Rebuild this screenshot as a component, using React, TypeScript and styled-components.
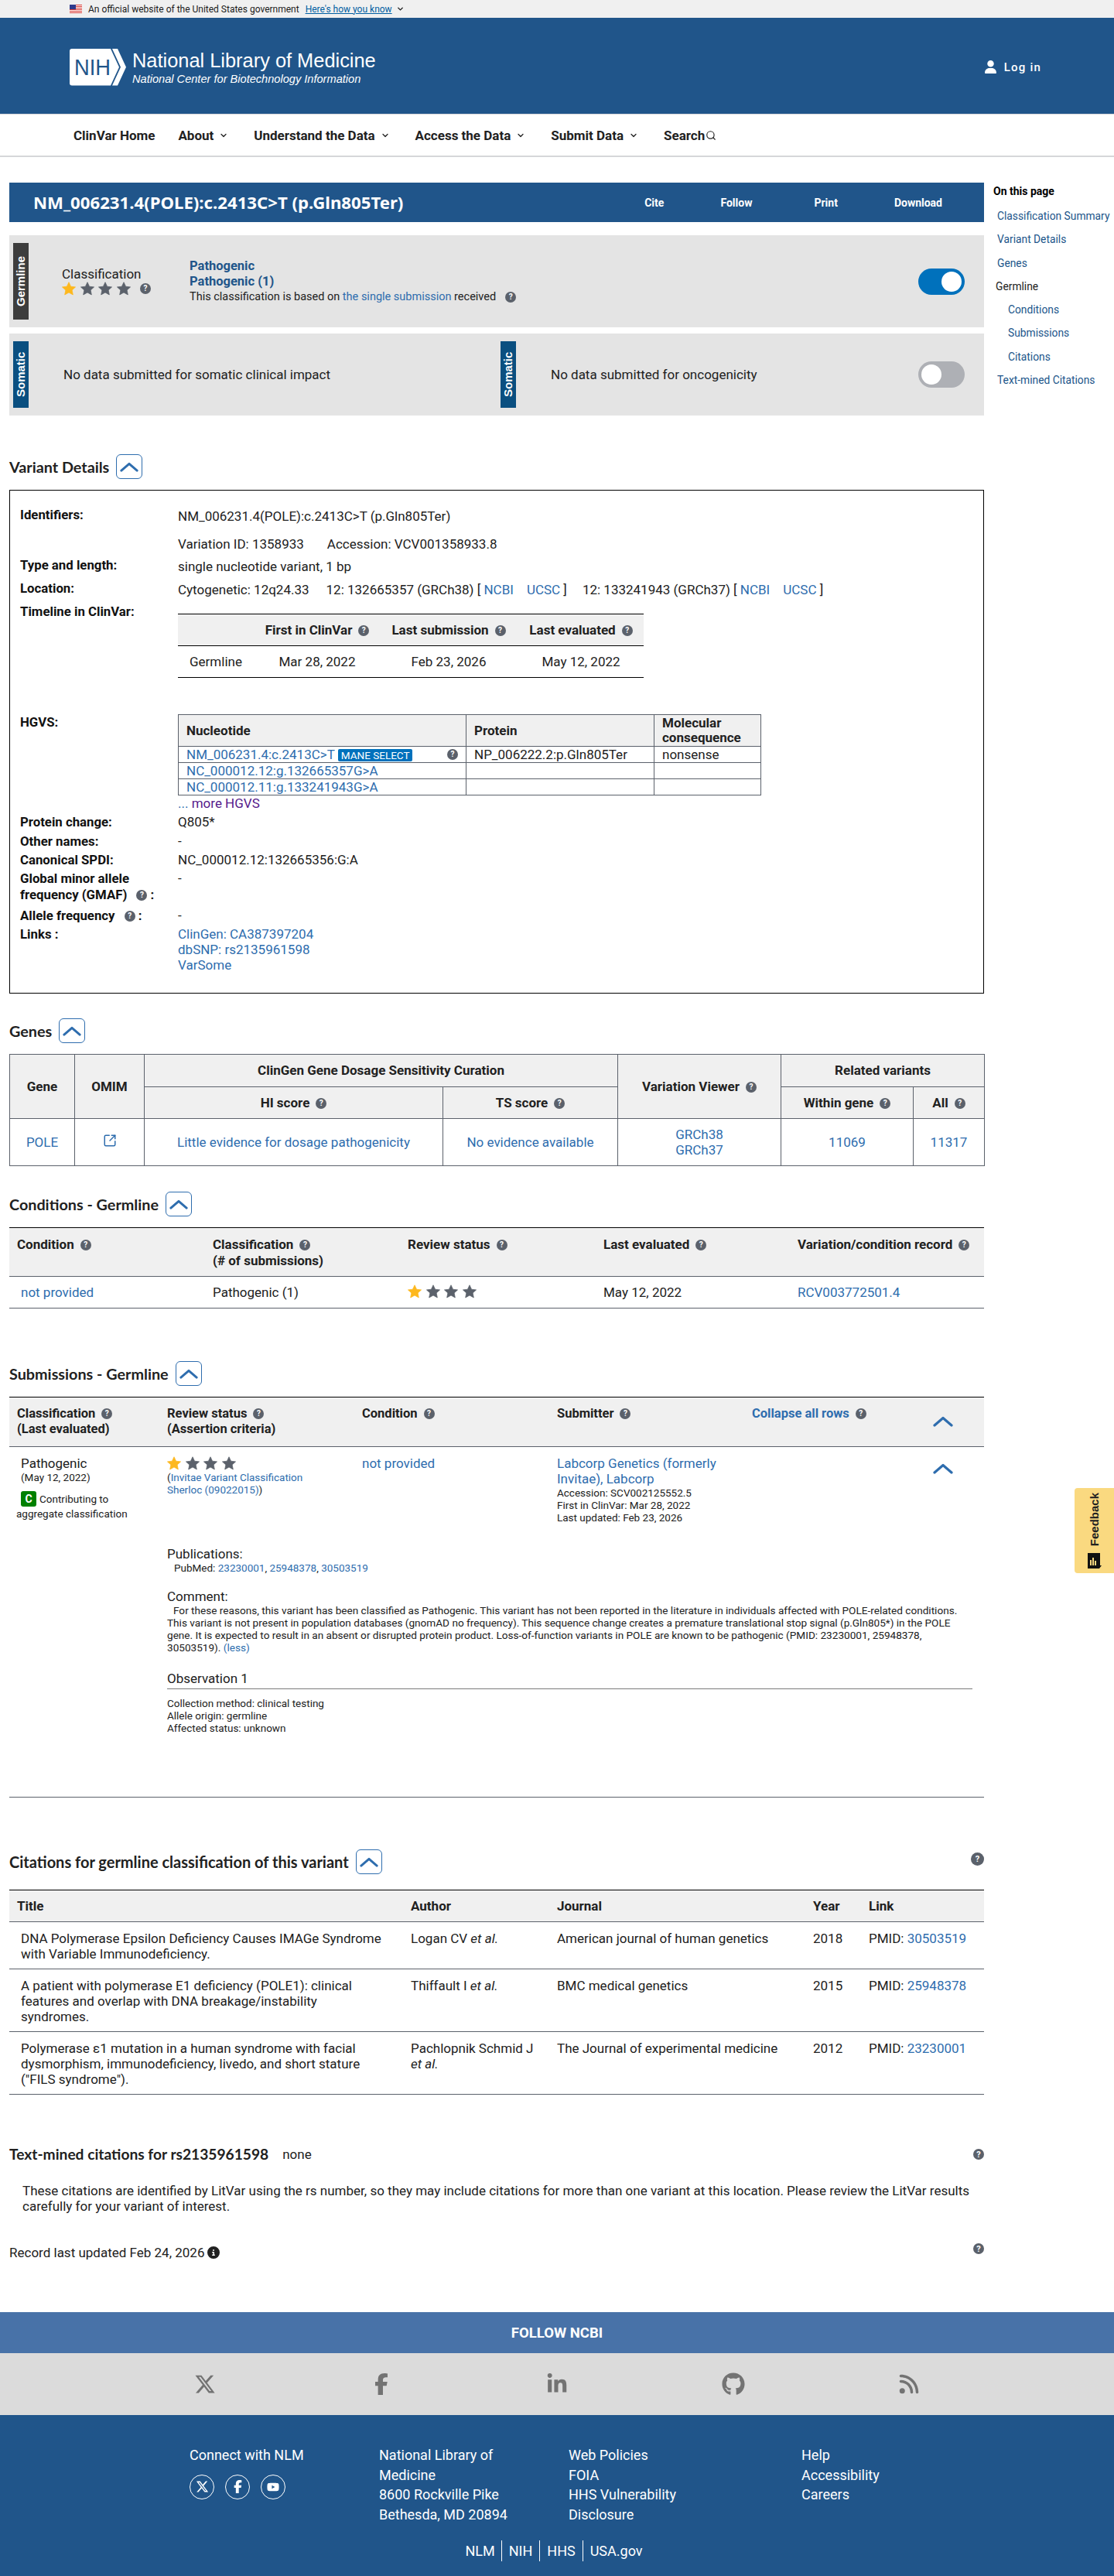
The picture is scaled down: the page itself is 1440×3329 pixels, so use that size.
import React from 'react';
import styled, { createGlobalStyle } from 'styled-components';
import { ChevronDown, Search, SquareArrowOutUpRight } from 'lucide-react';
import { FaXTwitter, FaFacebookF, FaLinkedinIn, FaGithub, FaRss, FaUser, FaCircleInfo, FaYoutube } from 'react-icons/fa6';

const NAVY = '#20558a';
const LINK = '#2e6dae';
const RULE = '#5b616b';

const GlobalStyle = createGlobalStyle`
  html, body { margin: 0; padding: 0; background: #fff; }
  body { font-family: Roboto, "Liberation Sans", sans-serif; font-size: 17px; color: #212121; }
  * { box-sizing: border-box; }
  table { border-collapse: collapse; table-layout: fixed; }
`;

const Page = styled.div`
  position: relative;
  width: 1440px;
  overflow: hidden;
`;

const Link = styled.a`
  color: ${LINK};
  text-decoration: none;
`;

/* top of page */
const GovBanner = styled.div`
  height: 23px;
  background: #f0f0f0;
  display: flex;
  align-items: center;
  padding-left: 90px;
  font-size: 12px;
  color: #1b1b1b;
`;
const GovText = styled.span`
  margin-left: 8px;
`;
const GovLink = styled.a`
  color: #005ea2;
  text-decoration: underline;
  margin-left: 8px;
`;
const GovChevron = styled(ChevronDown)`
  margin-left: 5px;
`;

const Header = styled.header`
  height: 125px;
  background: ${NAVY};
  display: flex;
  align-items: center;
  justify-content: space-between;
  padding: 3px 94px 0 90px;
  border-bottom: 1px solid #d6d7d9;
`;
const Brand = styled.div`
  display: flex;
  align-items: center;
  gap: 8px;
  color: #fff;
  font-family: "Liberation Sans", Arial, sans-serif;
`;
const BrandName = styled.div`
  font-size: 25.4px;
  line-height: 30px;
`;
const BrandSub = styled.div`
  font-size: 14.6px;
  font-style: italic;
  line-height: 18px;
`;
const LogIn = styled.a`
  display: flex;
  align-items: center;
  gap: 9px;
  color: #fff;
  font-size: 15px;
  font-weight: 500;
  letter-spacing: 1.2px;
`;

const Nav = styled.nav`
  height: 55px;
  display: flex;
  align-items: center;
  gap: 33px;
  padding-left: 95px;
  border-bottom: 2px solid #d6d7d9;
`;
const NavItem = styled.a<{ $first?: boolean }>`
  display: flex;
  align-items: center;
  gap: 7px;
  font-size: 17px;
  font-weight: 700;
  color: #212121;
  margin-right: ${p => (p.$first ? '-3px' : '0')};
`;
const SearchItem = styled(NavItem)`
  gap: 1px;
`;

/* main + right rail */
const Main = styled.main`
  display: flex;
  height: 2785px;
  padding: 26px 0 0 12px;
`;
const Content = styled.div`
  width: 1260px;
  padding-top: 7px;
`;
const Rail = styled.aside`
  margin-left: 12px;
  padding-top: 8px;
  font-size: 13.8px;
  display: flex;
  flex-direction: column;
`;
const RailTitle = styled.div`
  font-weight: 700;
  font-size: 14px;
  color: #000;
  line-height: 20px;
  margin-bottom: 12px;
`;
const RailLink = styled.a<{ $indent?: boolean }>`
  color: ${NAVY};
  line-height: 20px;
  margin: 0 0 10.3px ${p => (p.$indent ? '19px' : '5px')};
`;
const RailText = styled.span`
  line-height: 20px;
  margin: 0 0 10.3px 3px;
  color: #212121;
`;

const TitleBar = styled.div`
  height: 51px;
  background: ${NAVY};
  color: #fff;
  display: flex;
  align-items: center;
  padding-left: 31px;
`;
const VariantTitle = styled.h1`
  margin: 0;
  font-family: "Noto Sans", sans-serif;
  font-size: 22.2px;
  font-weight: 700;
`;
const Actions = styled.div`
  margin-left: auto;
  margin-right: 54px;
  display: flex;
  gap: 73px;
  font-size: 14px;
  font-weight: 700;
`;
const Action = styled.span<{ $extra?: number }>`
  margin-left: ${p => p.$extra ?? 0}px;
`;

const SummaryCard = styled.div<{ $h: number; $mt: number }>`
  height: ${p => p.$h}px;
  margin-top: ${p => p.$mt}px;
  background: #e4e4e4;
  display: flex;
  align-items: center;
  padding: 0 25px 0 5px;
`;
const SideTab = styled.div<{ $color: string }>`
  align-self: center;
  width: 20px;
  height: calc(100% - 20px);
  background: ${p => p.$color};
  color: #fff;
  writing-mode: vertical-rl;
  transform: rotate(180deg);
  text-align: center;
  font-family: "Liberation Sans", Arial, sans-serif;
  font-weight: 700;
  font-size: 15px;
  line-height: 20px;
  flex: none;
`;
const ClassLabel = styled.div`
  width: 165px;
  margin-left: 43px;
  margin-top: -2px;
  line-height: 20px;
`;
const ClassResult = styled.div`
  line-height: 20px;
`;
const Strong = styled.div`
  color: ${NAVY};
  font-weight: 700;
  font-size: 16.5px;
`;
const SmallLine = styled.div`
  font-size: 14.5px;
  display: flex;
  align-items: center;
  gap: 12px;
`;
const NoData = styled.div<{ $w: number }>`
  margin-left: 45px;
  width: ${p => p.$w}px;
`;
const Toggle = styled.div<{ $on?: boolean }>`
  margin-left: auto;
  width: 60px;
  height: 34px;
  flex: none;
  border-radius: 17px;
  background: ${p => (p.$on ? '#0071bc' : '#aeb0b5')};
  display: flex;
  align-items: center;
  justify-content: ${p => (p.$on ? 'flex-end' : 'flex-start')};
  padding: 0 4px;
`;
const Knob = styled.span`
  width: 26px;
  height: 26px;
  border-radius: 50%;
  background: #fff;
`;

const Help = styled.span<{ $size?: number }>`
  display: inline-flex;
  align-items: center;
  justify-content: center;
  flex: none;
  width: ${p => p.$size ?? 14}px;
  height: ${p => p.$size ?? 14}px;
  border-radius: 50%;
  background: ${RULE};
  color: #fff;
  font-family: Roboto, sans-serif;
  font-size: 10px;
  font-weight: 700;
  line-height: 1;
  vertical-align: 2px;
`;
const HelpGap = styled(Help)`
  margin-left: 7px;
  margin-top: 2px;
`;

const StarRow = styled.div`
  display: flex;
  gap: 5.5px;
`;

const SectionHead = styled.div<{ $mt: number; $mb: number }>`
  display: flex;
  align-items: center;
  gap: 9px;
  margin-top: ${p => p.$mt}px;
  margin-bottom: ${p => p.$mb}px;
`;
const SectionTitle = styled.h2<{ $size?: number }>`
  margin: 0;
  font-family: Lato, sans-serif;
  font-size: ${p => p.$size ?? 19.8}px;
  line-height: 22px;
  font-weight: 700;
  color: #212121;
`;
const CollapseBtn = styled.button`
  width: 34px;
  height: 32px;
  padding: 0;
  background: #fff;
  border: 1px solid ${LINK};
  border-radius: 6px;
  display: flex;
  align-items: center;
  justify-content: center;
`;
const FarHelp = styled(Help)<{ $up?: number }>`
  margin-left: auto;
  font-size: 11px;
  margin-top: ${p => -(p.$up ?? 0)}px;
`;

/* variant details box */
const DetailBox = styled.div`
  height: 651px;
  border: 1px solid #000;
  padding: 23px 0 0 13px;
`;
const DetailRow = styled.div<{ $mt?: number }>`
  display: grid;
  grid-template-columns: 204px 1fr;
  line-height: 20px;
  margin-top: ${p => p.$mt ?? 0}px;
`;
const DetailLabel = styled.div<{ $lh?: number; $up?: number }>`
  font-weight: 700;
  font-size: 16.8px;
  color: #111;
  line-height: ${p => p.$lh ?? 20}px;
  margin-top: ${p => -(p.$up ?? 0)}px;
`;
const Spaced = styled.div<{ $mt?: number }>`
  margin-top: ${p => p.$mt ?? 0}px;
`;
const Gap = styled.span<{ $w: number }>`
  display: inline-block;
  width: ${p => p.$w}px;
`;

const Timeline = styled.table`
  width: 602px;
  margin-top: 13px;
  border-top: 1px solid #000;
  border-bottom: 1px solid #000;
  th {
    height: 41px;
    background: #f0f0f0;
    border-bottom: 1px solid #000;
    font-weight: 700;
    text-align: center;
    padding: 0;
  }
  td {
    height: 41px;
    text-align: center;
    padding: 0;
  }
  td:first-child {
    text-align: left;
    padding-left: 15px;
  }
`;
const HeadHelp = styled(Help)`
  margin-left: 8px;
`;

const Hgvs = styled.table`
  width: 753px;
  line-height: 20px;
  th, td {
    border: 1px solid ${RULE};
    padding: 0 10px;
    text-align: left;
  }
  th {
    height: 41px;
    background: #f0f0f0;
    font-weight: 700;
    line-height: 19px;
  }
  td {
    height: 21px;
  }
`;
const HgvsCell = styled.div`
  display: flex;
  align-items: center;
  justify-content: space-between;
`;
const Mane = styled.span`
  background: #0071bc;
  color: #fff;
  font-size: 13.5px;
  line-height: 15px;
  padding: 0 4px;
  border-radius: 2px;
  margin-left: 4px;
`;
const MoreHgvs = styled.div`
  color: ${LINK};
`;
const Visited = styled.a`
  color: #551a8b;
`;

/* generic grid tables */
const GenesTable = styled.table`
  width: 1260px;
  th, td {
    border: 1px solid ${RULE};
    text-align: center;
    padding: 0;
  }
  th {
    height: 41.5px;
    background: #f0f0f0;
    font-weight: 700;
  }
  td {
    height: 61px;
    line-height: 20px;
  }
`;
const DataTable = styled.table`
  width: 1260px;
  border-top: 1px solid #000;
  th {
    text-align: left;
    vertical-align: top;
    background: #f0f0f0;
    border-bottom: 1px solid ${RULE};
    padding: 11px 10px 0;
    line-height: 21px;
    font-weight: 700;
  }
  td {
    border-bottom: 1px solid ${RULE};
    vertical-align: top;
    padding: 11px 10px 0;
    line-height: 20px;
  }
  td:first-child {
    padding-left: 15px;
    padding-right: 22px;
  }
`;
const ConditionsHead = styled.tr`
  height: 63px;
`;
const ConditionsRow = styled.tr`
  height: 41px;
  td {
    padding-top: 10px;
  }
`;
const CitationHead = styled.tr`
  height: 41px;
  th {
    padding-top: 10px;
  }
`;
const CitationRow = styled.tr<{ $h: number }>`
  height: ${p => p.$h}px;
`;

/* submissions */
const SubmissionBlock = styled.div`
  height: 518px;
  border-bottom: 1px solid ${RULE};
`;
const SubGrid = styled.div`
  display: grid;
  grid-template-columns: 194px 252px 252px 252px 310px;
`;
const SubHead = styled(SubGrid)`
  height: 65px;
  border-top: 1px solid #000;
  border-bottom: 1px solid ${RULE};
  background: #f0f0f0;
  font-weight: 700;
  font-size: 16.5px;
  line-height: 20px;
  padding-top: 11px;
`;
const SubCell = styled.div<{ $indent?: number }>`
  padding-left: ${p => p.$indent ?? 10}px;
`;
const CollapseCell = styled.div`
  padding-left: 10px;
  padding-right: 40px;
  display: flex;
  justify-content: space-between;
`;
const CollapseAll = styled.span`
  color: ${LINK};
`;
const SubBody = styled(SubGrid)`
  padding-top: 11px;
`;
const Tiny = styled.div<{ $pl?: number }>`
  font-size: 13.5px;
  line-height: 16px;
  padding-left: ${p => p.$pl ?? 0}px;
`;
const Badge = styled.span`
  display: inline-flex;
  width: 20px;
  height: 20px;
  align-items: center;
  justify-content: center;
  background: #008000;
  color: #fff;
  font-weight: 700;
  font-size: 14px;
  border-radius: 3px;
  margin-right: 4px;
  vertical-align: top;
`;
const BadgeLine = styled.div`
  font-size: 13.5px;
  margin-top: 10px;
  line-height: 20px;
`;
const BadgeTail = styled.div`
  font-size: 13.5px;
  line-height: 18px;
  margin-left: -6px;
`;
const Line20 = styled.div`
  line-height: 20px;
`;
const StarSlot = styled.div`
  height: 20px;
  padding-top: 1px;
`;
const SubDetails = styled.div`
  margin-left: 204px;
  width: 1041px;
  margin-top: 29px;
`;
const SubTitle = styled.div<{ $mt?: number }>`
  line-height: 20px;
  margin-top: ${p => p.$mt ?? 0}px;
`;
const ObsTitle = styled.div`
  margin-top: 22px;
  line-height: 20px;
  border-bottom: 1px solid #7a7a7a;
  padding-bottom: 3px;
  margin-bottom: 10px;
`;
const CommentText = styled.div`
  font-size: 13.6px;
  line-height: 16px;
  text-indent: 8px;
`;

/* text mined + record */
const TextMinedHead = styled.div`
  display: flex;
  align-items: center;
  margin-top: 66px;
`;
const NoneText = styled.span`
  margin-left: 18px;
`;
const Paragraph = styled.p`
  margin: 26px 0 0 17px;
  width: 1232px;
  line-height: 20px;
`;
const RecordLine = styled.div`
  margin-top: 40px;
  display: flex;
  align-items: center;
  line-height: 20px;
`;
const InfoIcon = styled(FaCircleInfo)`
  margin-left: 4px;
`;

/* footer */
const FollowBar = styled.div`
  height: 53px;
  background: #4872a8;
  color: #fff;
  font-size: 18.5px;
  font-weight: 700;
  display: flex;
  align-items: center;
  justify-content: center;
`;
const SocialBar = styled.div`
  height: 80px;
  background: #dbdbdb;
  display: flex;
  align-items: center;
  justify-content: space-between;
  padding: 0 250px;
  color: #737373;
`;
const SocialSlot = styled.span`
  width: 30px;
  display: flex;
  justify-content: center;
`;
const FooterBody = styled.div`
  height: 208px;
  background: ${NAVY};
  color: #fff;
  padding-top: 39px;
  font-size: 18px;
`;
const FooterCols = styled.div`
  display: grid;
  grid-template-columns: 245px 245px 301px 1fr;
  padding-left: 245px;
  line-height: 25.6px;
  height: 102px;
`;
const Circles = styled.div`
  display: flex;
  gap: 14px;
  margin-top: 12px;
`;
const Circle = styled.span`
  width: 32px;
  height: 32px;
  border: 1px solid #fff;
  border-radius: 50%;
  display: flex;
  align-items: center;
  justify-content: center;
`;
const BottomLinks = styled.div`
  margin-top: 21px;
  padding-right: 8px;
  display: flex;
  align-items: center;
  justify-content: center;
`;
const BottomLink = styled.a`
  line-height: 27px;
  padding: 0 9px;
  border-right: 1px solid #fff;
  &:first-child { padding-left: 0; padding-right: 8px; }
  &:last-child { border-right: none; padding-right: 0; }
`;

const Feedback = styled.div`
  position: absolute;
  right: 0;
  top: 1923px;
  width: 51px;
  height: 110px;
  background: #fad980;
  border-radius: 4px 0 0 4px;
  display: flex;
  flex-direction: column;
  align-items: center;
  justify-content: center;
  gap: 8px;
`;
const FeedbackText = styled.span`
  writing-mode: vertical-rl;
  transform: rotate(180deg);
  font-family: "Liberation Sans", Arial, sans-serif;
  font-weight: 700;
  font-size: 15px;
  color: #212121;
`;

const UpChevron = ({ w = 24, h = 13 }: { w?: number; h?: number }) => (
  <svg width={w} height={h} viewBox="0 0 26 14">
    <polyline points="2,12 13,2.5 24,12" fill="none" stroke={LINK} strokeWidth="3.2" strokeLinecap="round" strokeLinejoin="round" />
  </svg>
);

const Star = ({ on }: { on?: boolean }) => (
  <svg width="18" height="18" viewBox="0 0 24 24">
    <polygon
      points="12,1 15.4,8.3 23.4,9.2 17.5,14.6 19.1,22.6 12,18.6 4.9,22.6 6.5,14.6 0.6,9.2 8.6,8.3"
      fill={on ? '#fdb81e' : RULE}
      stroke={on ? '#fdb81e' : RULE}
      strokeLinejoin="round"
    />
  </svg>
);
const Stars = () => (
  <StarRow>
    <Star on />
    <Star />
    <Star />
    <Star />
  </StarRow>
);

const Flag = () => (
  <svg width="16" height="11" viewBox="0 0 16 11">
    <rect width="16" height="11" fill="#fff" />
    <rect width="16" height="1" fill="#d83933" />
    <rect y="2" width="16" height="1" fill="#d83933" />
    <rect y="4" width="16" height="1" fill="#d83933" />
    <rect y="6" width="16" height="1" fill="#d83933" />
    <rect y="8" width="16" height="1" fill="#d83933" />
    <rect y="10" width="16" height="1" fill="#d83933" />
    <rect width="8" height="6" fill="#2e3a8c" />
  </svg>
);

const NihLogo = () => (
  <svg width="73" height="48" viewBox="0 0 73 48">
    <path d="M3 0 H53 L64 23.8 L53 47.5 H3 A3 3 0 0 1 0 44.5 V3 A3 3 0 0 1 3 0 Z" fill="#fff" />
    <path d="M55 0 H62 L73 23.8 L62 47.5 H55 L66 23.8 Z" fill="#fff" />
    <text x="6" y="34" fontFamily="Liberation Sans, Arial, sans-serif" fontSize="29" textLength="47" lengthAdjust="spacingAndGlyphs" fill={NAVY}>NIH</text>
  </svg>
);

const FeedbackMark = () => (
  <svg width="18" height="20" viewBox="0 0 18 20">
    <path d="M0 0 H16 V16 H18 L15 20 H0 Z" fill="#111" />
    <rect x="3" y="9" width="2" height="7" fill="#fad980" />
    <rect x="6" y="6" width="2" height="10" fill="#fad980" />
    <rect x="9" y="10" width="2" height="6" fill="#fad980" />
  </svg>
);

const App = () => (
  <Page>
    <GlobalStyle />
    <GovBanner>
      <Flag />
      <GovText>An official website of the United States government</GovText>
      <GovLink>Here's how you know</GovLink>
      <GovChevron size={11} strokeWidth={3} />
    </GovBanner>

    <Header>
      <Brand>
        <NihLogo />
        <div>
          <BrandName>National Library of Medicine</BrandName>
          <BrandSub>National Center for Biotechnology Information</BrandSub>
        </div>
      </Brand>
      <LogIn>
        <FaUser size={17} />
        Log in
      </LogIn>
    </Header>

    <Nav>
      <NavItem $first>ClinVar Home</NavItem>
      <NavItem>About <ChevronDown size={12} strokeWidth={2.5} /></NavItem>
      <NavItem>Understand the Data <ChevronDown size={12} strokeWidth={2.5} /></NavItem>
      <NavItem>Access the Data <ChevronDown size={12} strokeWidth={2.5} /></NavItem>
      <NavItem>Submit Data <ChevronDown size={12} strokeWidth={2.5} /></NavItem>
      <SearchItem>Search<Search size={14} strokeWidth={2} /></SearchItem>
    </Nav>

    <Main>
      <Content>
        <TitleBar>
          <VariantTitle>NM_006231.4(POLE):c.2413C&gt;T (p.Gln805Ter)</VariantTitle>
          <Actions>
            <Action>Cite</Action>
            <Action>Follow</Action>
            <Action $extra={7}>Print</Action>
            <Action>Download</Action>
          </Actions>
        </TitleBar>

        <SummaryCard $h={119} $mt={17}>
          <SideTab $color="#3d3d3d">Germline</SideTab>
          <ClassLabel>
            Classification
            <StarRow>
              <Star on />
              <Star />
              <Star />
              <Star />
              <HelpGap>?</HelpGap>
            </StarRow>
          </ClassLabel>
          <ClassResult>
            <Strong>Pathogenic</Strong>
            <Strong>Pathogenic (1)</Strong>
            <SmallLine>
              <span>This classification is based on <Link>the single submission</Link> received</span>
              <Help>?</Help>
            </SmallLine>
          </ClassResult>
          <Toggle $on><Knob /></Toggle>
        </SummaryCard>

        <SummaryCard $h={106} $mt={8}>
          <SideTab $color="#0a4f80">Somatic</SideTab>
          <NoData $w={565}>No data submitted for somatic clinical impact</NoData>
          <SideTab $color="#0a4f80">Somatic</SideTab>
          <NoData $w={400}>No data submitted for oncogenicity</NoData>
          <Toggle><Knob /></Toggle>
        </SummaryCard>

        <SectionHead $mt={50} $mb={14}>
          <SectionTitle>Variant Details</SectionTitle>
          <CollapseBtn><UpChevron /></CollapseBtn>
        </SectionHead>

        <DetailBox>
          <DetailRow>
            <DetailLabel $up={2}>Identifiers:</DetailLabel>
            <div>
              NM_006231.4(POLE):c.2413C&gt;T (p.Gln805Ter)
              <Spaced $mt={16}>Variation ID: 1358933<Gap $w={30} />Accession: VCV001358933.8</Spaced>
            </div>
          </DetailRow>
          <DetailRow $mt={9}>
            <DetailLabel $up={2}>Type and length:</DetailLabel>
            <div>single nucleotide variant, 1 bp</div>
          </DetailRow>
          <DetailRow $mt={10}>
            <DetailLabel $up={2}>Location:</DetailLabel>
            <div>
              Cytogenetic: 12q24.33<Gap $w={22} />12: 132665357 (GRCh38) [ <Link>NCBI</Link><Gap $w={17} /><Link>UCSC</Link> ]<Gap $w={20} />12: 133241943 (GRCh37) [ <Link>NCBI</Link><Gap $w={17} /><Link>UCSC</Link> ]
            </div>
          </DetailRow>
          <DetailRow $mt={8}>
            <DetailLabel>Timeline in ClinVar:</DetailLabel>
            <Timeline>
              <colgroup>
                <col width={100} />
                <col width={160} />
                <col width={180} />
                <col width={162} />
              </colgroup>
              <thead>
                <tr>
                  <th />
                  <th>First in ClinVar<HeadHelp>?</HeadHelp></th>
                  <th>Last submission<HeadHelp>?</HeadHelp></th>
                  <th>Last evaluated<HeadHelp>?</HeadHelp></th>
                </tr>
              </thead>
              <tbody>
                <tr>
                  <td>Germline</td>
                  <td>Mar 28, 2022</td>
                  <td>Feb 23, 2026</td>
                  <td>May 12, 2022</td>
                </tr>
              </tbody>
            </Timeline>
          </DetailRow>
          <DetailRow $mt={47}>
            <DetailLabel>HGVS:</DetailLabel>
            <div>
              <Hgvs>
                <colgroup>
                  <col width={372} />
                  <col width={243} />
                  <col width={138} />
                </colgroup>
                <thead>
                  <tr>
                    <th>Nucleotide</th>
                    <th>Protein</th>
                    <th>Molecular consequence</th>
                  </tr>
                </thead>
                <tbody>
                  <tr>
                    <td>
                      <HgvsCell>
                        <span><Link>NM_006231.4:c.2413C&gt;T</Link><Mane>MANE SELECT</Mane></span>
                        <Help>?</Help>
                      </HgvsCell>
                    </td>
                    <td>NP_006222.2:p.Gln805Ter</td>
                    <td>nonsense</td>
                  </tr>
                  <tr>
                    <td><Link>NC_000012.12:g.132665357G&gt;A</Link></td>
                    <td />
                    <td />
                  </tr>
                  <tr>
                    <td><Link>NC_000012.11:g.133241943G&gt;A</Link></td>
                    <td />
                    <td />
                  </tr>
                </tbody>
              </Hgvs>
              <MoreHgvs>... <Visited>more HGVS</Visited></MoreHgvs>
            </div>
          </DetailRow>
          <DetailRow $mt={4}>
            <DetailLabel>Protein change:</DetailLabel>
            <div>Q805*</div>
          </DetailRow>
          <DetailRow $mt={5}>
            <DetailLabel>Other names:</DetailLabel>
            <div>-</div>
          </DetailRow>
          <DetailRow $mt={4}>
            <DetailLabel>Canonical SPDI:</DetailLabel>
            <div>NC_000012.12:132665356:G:A</div>
          </DetailRow>
          <DetailRow $mt={4}>
            <DetailLabel $lh={21}>Global minor allele<br />frequency (GMAF) <HeadHelp>?</HeadHelp> :</DetailLabel>
            <div>-</div>
          </DetailRow>
          <DetailRow $mt={6}>
            <DetailLabel>Allele frequency <HeadHelp>?</HeadHelp> :</DetailLabel>
            <div>-</div>
          </DetailRow>
          <DetailRow $mt={4}>
            <DetailLabel>Links :</DetailLabel>
            <div>
              <Link>ClinGen: CA387397204</Link><br />
              <Link>dbSNP: rs2135961598</Link><br />
              <Link>VarSome</Link>
            </div>
          </DetailRow>
        </DetailBox>

        <SectionHead $mt={32} $mb={14}>
          <SectionTitle>Genes</SectionTitle>
          <CollapseBtn><UpChevron /></CollapseBtn>
        </SectionHead>

        <GenesTable>
          <colgroup>
            <col width={84} />
            <col width={90} />
            <col width={386} />
            <col width={226} />
            <col width={211} />
            <col width={171} />
            <col width={92} />
          </colgroup>
          <thead>
            <tr>
              <th rowSpan={2}>Gene</th>
              <th rowSpan={2}>OMIM</th>
              <th colSpan={2}>ClinGen Gene Dosage Sensitivity Curation</th>
              <th rowSpan={2}>Variation Viewer<HeadHelp>?</HeadHelp></th>
              <th colSpan={2}>Related variants</th>
            </tr>
            <tr>
              <th>HI score<HeadHelp>?</HeadHelp></th>
              <th>TS score<HeadHelp>?</HeadHelp></th>
              <th>Within gene<HeadHelp>?</HeadHelp></th>
              <th>All<HeadHelp>?</HeadHelp></th>
            </tr>
          </thead>
          <tbody>
            <tr>
              <td><Link>POLE</Link></td>
              <td><Link><SquareArrowOutUpRight size={18} /></Link></td>
              <td><Link>Little evidence for dosage pathogenicity</Link></td>
              <td><Link>No evidence available</Link></td>
              <td><Link>GRCh38</Link><br /><Link>GRCh37</Link></td>
              <td><Link>11069</Link></td>
              <td><Link>11317</Link></td>
            </tr>
          </tbody>
        </GenesTable>

        <SectionHead $mt={33} $mb={14}>
          <SectionTitle>Conditions - Germline</SectionTitle>
          <CollapseBtn><UpChevron /></CollapseBtn>
        </SectionHead>

        <DataTable>
          <colgroup>
            <col width={253} />
            <col width={252} />
            <col width={253} />
            <col width={251} />
            <col width={251} />
          </colgroup>
          <thead>
            <ConditionsHead>
              <th>Condition<HeadHelp>?</HeadHelp></th>
              <th>Classification<HeadHelp>?</HeadHelp><br />(# of submissions)</th>
              <th>Review status<HeadHelp>?</HeadHelp></th>
              <th>Last evaluated<HeadHelp>?</HeadHelp></th>
              <th>Variation/condition record<HeadHelp>?</HeadHelp></th>
            </ConditionsHead>
          </thead>
          <tbody>
            <ConditionsRow>
              <td><Link>not provided</Link></td>
              <td>Pathogenic (1)</td>
              <td><Stars /></td>
              <td>May 12, 2022</td>
              <td><Link>RCV003772501.4</Link></td>
            </ConditionsRow>
          </tbody>
        </DataTable>

        <SectionHead $mt={68} $mb={14}>
          <SectionTitle>Submissions - Germline</SectionTitle>
          <CollapseBtn><UpChevron /></CollapseBtn>
        </SectionHead>

        <SubmissionBlock>
          <SubHead>
            <SubCell>Classification<HeadHelp>?</HeadHelp><br />(Last evaluated)</SubCell>
            <SubCell>Review status<HeadHelp>?</HeadHelp><br />(Assertion criteria)</SubCell>
            <SubCell>Condition<HeadHelp>?</HeadHelp></SubCell>
            <SubCell>Submitter<HeadHelp>?</HeadHelp></SubCell>
            <CollapseCell>
              <CollapseAll>Collapse all rows<HeadHelp>?</HeadHelp></CollapseAll>
              <Spaced $mt={12}><UpChevron w={26} h={14} /></Spaced>
            </CollapseCell>
          </SubHead>
          <SubBody>
            <SubCell $indent={15}>
              <Line20>Pathogenic</Line20>
              <Tiny>(May 12, 2022)</Tiny>
              <BadgeLine><Badge>C</Badge>Contributing to</BadgeLine>
              <BadgeTail>aggregate classification</BadgeTail>
            </SubCell>
            <SubCell>
              <StarSlot><Stars /></StarSlot>
              <Tiny>(<Link>Invitae Variant Classification</Link></Tiny>
              <Tiny><Link>Sherloc (09022015)</Link>)</Tiny>
            </SubCell>
            <SubCell><Line20><Link>not provided</Link></Line20></SubCell>
            <SubCell>
              <Line20><Link>Labcorp Genetics (formerly<br />Invitae), Labcorp</Link></Line20>
              <Tiny>Accession: SCV002125552.5</Tiny>
              <Tiny>First in ClinVar: Mar 28, 2022</Tiny>
              <Tiny>Last updated: Feb 23, 2026</Tiny>
            </SubCell>
            <CollapseCell>
              <span />
              <Spaced $mt={8}><UpChevron w={26} h={14} /></Spaced>
            </CollapseCell>
          </SubBody>
          <SubDetails>
            <SubTitle>Publications:</SubTitle>
            <Tiny $pl={9}>PubMed: <Link>23230001</Link>, <Link>25948378</Link>, <Link>30503519</Link></Tiny>
            <SubTitle $mt={19}>Comment:</SubTitle>
            <CommentText>
              For these reasons, this variant has been classified as Pathogenic. This variant has not been reported in the literature in individuals affected with POLE-related conditions. This variant is not present in population databases (gnomAD no frequency). This sequence change creates a premature translational stop signal (p.Gln805*) in the POLE gene. It is expected to result in an absent or disrupted protein product. Loss-of-function variants in POLE are known to be pathogenic (PMID: 23230001, 25948378, 30503519). <Link>(less)</Link>
            </CommentText>
            <ObsTitle>Observation 1</ObsTitle>
            <Tiny>Collection method: clinical testing</Tiny>
            <Tiny>Allele origin: germline</Tiny>
            <Tiny>Affected status: unknown</Tiny>
          </SubDetails>
        </SubmissionBlock>

        <SectionHead $mt={67} $mb={20}>
          <SectionTitle $size={20}>Citations for germline classification of this variant</SectionTitle>
          <CollapseBtn><UpChevron /></CollapseBtn>
          <FarHelp $size={17} $up={7}>?</FarHelp>
        </SectionHead>

        <DataTable>
          <colgroup>
            <col width={509} />
            <col width={189} />
            <col width={331} />
            <col width={72} />
            <col width={159} />
          </colgroup>
          <thead>
            <CitationHead>
              <th>Title</th>
              <th>Author</th>
              <th>Journal</th>
              <th>Year</th>
              <th>Link</th>
            </CitationHead>
          </thead>
          <tbody>
            <CitationRow $h={61}>
              <td>DNA Polymerase Epsilon Deficiency Causes IMAGe Syndrome with Variable Immunodeficiency.</td>
              <td>Logan CV <em>et al.</em></td>
              <td>American journal of human genetics</td>
              <td>2018</td>
              <td>PMID: <Link>30503519</Link></td>
            </CitationRow>
            <CitationRow $h={81}>
              <td>A patient with polymerase E1 deficiency (POLE1): clinical features and overlap with DNA breakage/instability syndromes.</td>
              <td>Thiffault I <em>et al.</em></td>
              <td>BMC medical genetics</td>
              <td>2015</td>
              <td>PMID: <Link>25948378</Link></td>
            </CitationRow>
            <CitationRow $h={81}>
              <td>Polymerase ε1 mutation in a human syndrome with facial dysmorphism, immunodeficiency, livedo, and short stature ("FILS syndrome").</td>
              <td>Pachlopnik Schmid J <em>et al.</em></td>
              <td>The Journal of experimental medicine</td>
              <td>2012</td>
              <td>PMID: <Link>23230001</Link></td>
            </CitationRow>
          </tbody>
        </DataTable>

        <TextMinedHead>
          <SectionTitle $size={19.2}>Text-mined citations for rs2135961598</SectionTitle>
          <NoneText>none</NoneText>
          <FarHelp>?</FarHelp>
        </TextMinedHead>
        <Paragraph>
          These citations are identified by LitVar using the rs number, so they may include citations for more than one variant at this location. Please review the LitVar results carefully for your variant of interest.
        </Paragraph>
        <RecordLine>
          Record last updated Feb 24, 2026<InfoIcon size={16} color="#212121" />
          <FarHelp $up={10}>?</FarHelp>
        </RecordLine>
      </Content>

      <Rail>
        <RailTitle>On this page</RailTitle>
        <RailLink>Classification Summary</RailLink>
        <RailLink>Variant Details</RailLink>
        <RailLink>Genes</RailLink>
        <RailText>Germline</RailText>
        <RailLink $indent>Conditions</RailLink>
        <RailLink $indent>Submissions</RailLink>
        <RailLink $indent>Citations</RailLink>
        <RailLink>Text-mined Citations</RailLink>
      </Rail>
    </Main>

    <Feedback>
      <FeedbackText>Feedback</FeedbackText>
      <FeedbackMark />
    </Feedback>

    <footer>
      <FollowBar>FOLLOW NCBI</FollowBar>
      <SocialBar>
        <SocialSlot><FaXTwitter size={28} /></SocialSlot>
        <SocialSlot><FaFacebookF size={28} /></SocialSlot>
        <SocialSlot><FaLinkedinIn size={28} /></SocialSlot>
        <SocialSlot><FaGithub size={30} /></SocialSlot>
        <SocialSlot><FaRss size={28} /></SocialSlot>
      </SocialBar>
      <FooterBody>
        <FooterCols>
          <div>
            Connect with NLM
            <Circles>
              <Circle><FaXTwitter size={17} /></Circle>
              <Circle><FaFacebookF size={17} /></Circle>
              <Circle><FaYoutube size={16} /></Circle>
            </Circles>
          </div>
          <div>
            National Library of<br />Medicine<br />8600 Rockville Pike<br />Bethesda, MD 20894
          </div>
          <div>
            Web Policies<br />FOIA<br />HHS Vulnerability<br />Disclosure
          </div>
          <div>
            Help<br />Accessibility<br />Careers
          </div>
        </FooterCols>
        <BottomLinks>
          <BottomLink>NLM</BottomLink>
          <BottomLink>NIH</BottomLink>
          <BottomLink>HHS</BottomLink>
          <BottomLink>USA.gov</BottomLink>
        </BottomLinks>
      </FooterBody>
    </footer>
  </Page>
);

export default App;
